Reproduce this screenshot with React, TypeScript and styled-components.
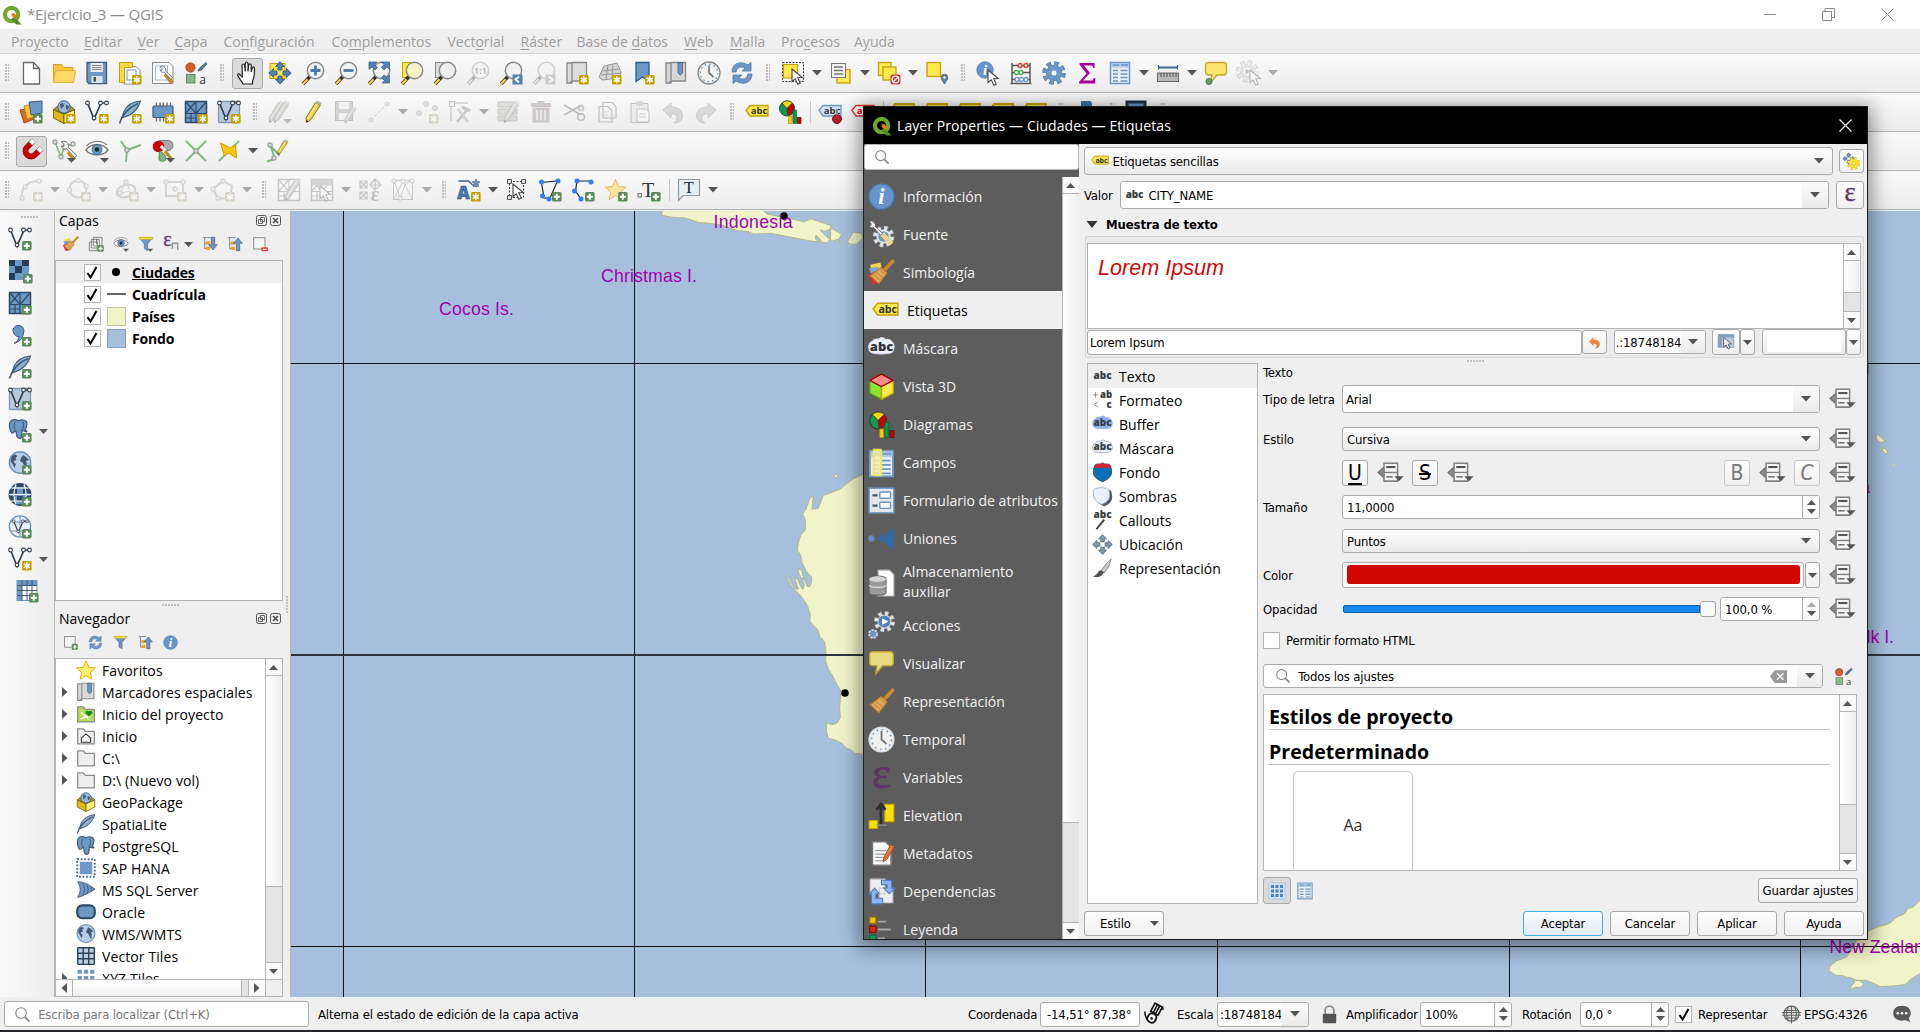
import React from "react";
import styled, { createGlobalStyle, css } from "styled-components";

const UI = `"Open Sans", "Noto Sans", sans-serif`;
const TAHOMA = `"DejaVu Sans Condensed", "DejaVu Sans", sans-serif`;

const Global = createGlobalStyle`
  * { box-sizing: border-box; }
  body { margin: 0; background: #efefef; overflow: hidden; font-family: ${UI}; font-size: 14px; color: #000; }
  svg { display: block; flex: none; }
`;

/* ------------------------------------------------------------------ icons */

const B = "#6d97c4";
const D = "#415a75";
const Y = "#fce94f";
const G = "#c4a000";

const Plus = ({ x = 14, y = 14 }: { x?: number; y?: number }) => (
  <g transform={`translate(${x} ${y})`}>
    <rect width="9.6" height="9.6" rx="1.6" fill="#5a8c5a" />
    <path d="M4.8 1.8v6M1.8 4.8h6" stroke="#fff" strokeWidth="2" />
  </g>
);
const Star = ({ x = 14, y = 14 }: { x?: number; y?: number }) => (
  <g transform={`translate(${x} ${y})`}>
    <rect width="9.6" height="9.6" rx="1.4" fill="#c4a000" />
    <path d="M4.8 1.3v7M1.8 3l6 3.6M7.8 3l-6 3.6" stroke="#fff" strokeWidth="1.5" />
  </g>
);
const Drop = ({ x = 15, y = 19 }: { x?: number; y?: number }) => (
  <path d={`M${x} ${y}h9l-4.5 4.8z`} fill="#555" />
);
const Lens = ({ fill = "#f2f4f2", children }: { fill?: string; children?: React.ReactNode }) => (
  <>
    <path d="M9 15.500 2 23" stroke="#333" strokeWidth="3.6" />
    <path d="M6.500 18.200 2 23" stroke="#fccf3e" strokeWidth="2.2" />
    <circle cx="14.500" cy="9.500" r="8.200" fill={fill} stroke="#888" strokeWidth="1.5" />
    {children}
  </>
);
const Cursor = ({ x = 10, y = 8 }: { x?: number; y?: number }) => (
  <path transform={`translate(${x} ${y})`} d="M0 0v12.500l3.200-2.700 2.600 5.400 2.400-1.200-2.500-5.200 4.600-.3z" fill="#fff" stroke="#444" strokeWidth="1.100" />
);
const Vee = () => (
  <g fill="#fff" stroke="#333f4c" strokeWidth="1.100">
    <path d="M2.500 3 9 19 16 3h5.500" fill="none" strokeWidth="1.700" />
    <circle cx="2.500" cy="3" r="1.900" /><circle cx="9" cy="18" r="1.900" /><circle cx="15.500" cy="3" r="1.900" /><circle cx="21.500" cy="3" r="1.900" />
  </g>
);
const Pencil = ({ c = "#e8cf3a", t = "" }: { c?: string; t?: string }) => (
  <g transform={t}>
    <path d="M14.500 2.500 19.500 5 9.500 20 5.500 22.500 5 18z" fill={c} stroke="#8a7a20" strokeWidth="1" />
    <path d="M16.500 3.500 6.800 19" stroke="#fff" strokeOpacity=".5" strokeWidth="1.500" />
    <path d="M14.500 2.500 16 .5l4.800 2.300-1.300 2.200z" fill="#b8b8b8" />
    <path d="m5.300 20 .2 2.500 2-1.200z" fill="#222" />
  </g>
);
const Feather = () => (
  <>
    <path d="M22.500 1C15 1.500 9 5 6 11.500L4 18l4-1.500c7-2.500 12-7.500 14.500-15.500z" fill="#8fb2d8" stroke={D} strokeWidth="1.200" />
    <path d="M1.500 23.500C4 15 10 8 20 3.500" stroke={D} strokeWidth="1.600" fill="none" />
  </>
);
const Tag = ({ f = Y, s = G, t = "#333" }: { f?: string; s?: string; t?: string }) => (
  <>
    <path d="M1 10.500 5 5.500h18v10.500H5z" fill={f} stroke={s} strokeWidth="1.300" />
    <text x="14" y="14" fontSize="9.500" fontWeight="700" textAnchor="middle" fontFamily={UI} fill={t}>abc</text>
  </>
);
const Abc = ({ y = 14, c = "#3a3f42" }: { y?: number; c?: string }) => (
  <text x="12" y={y} fontSize="11.500" fontWeight="800" textAnchor="middle" fontFamily={UI} fill={c}>abc</text>
);
const Cloud = ({ f, s }: { f: string; s: string }) => (
  <path d="M4 5.500C6 2.500 9 4 10 3.500c2-2 5-1 5.500.8 3-1 5 .2 5.500 1.700 3 1.500 3 8.500-1 10-4 .8-12 .8-16 0-4.500-1.500-4.500-8.500 0-10.500z" fill={f} stroke={s} />
);
const Globe = ({ dark = false }: { dark?: boolean }) => (
  <>
    <circle cx="12" cy="11.500" r="10.700" fill={dark ? "#6d97c4" : "#b9cfe8"} stroke={dark ? "#2d4a68" : B} strokeWidth="1.500" />
    {dark ? (
      <>
        <path d="M3 5.500h6v5H1.500zM15 5.500h6l1.500 5H15zM9 13h6v5H9zM2 13h5v5H4zM9 1h6l1 3H8zM17 13h5l-2 5h-3z" fill="#2d4a68" />
        <path d="M8 1.500c-2.500 6-2.500 14 0 20M16 1.500c2.500 6 2.500 14 0 20M2 5h20M1 11.500h22M2.500 18h19" fill="none" stroke="#fff" strokeWidth="1.200" />
      </>
    ) : (
      <path d="M3.500 6c1-1.500 2-2.500 4-2.500l2 1.500-2 2 1 2-3 1 1 2 1.500 1-1.500 4-2-4-2-3zM13 7l2-3 3 2 3 3-3 1 1 3-2 4-2-5-3-2zM17 16l2-1-1 3z" fill={D} />
    )}
  </>
);
const Elephant = () => (
  <>
    <path d="M4 1.500C1 3 1 9 3 14c1 2.500 3 2.500 4 .5l2-1 1 6c1 3.500 5 3.500 5.500 0L16 13l5 1.500c1.500-1-.5-1-1.500-2 2-4 3-8 1-10C18 .5 14 1 12 2 9 .5 6 .7 4 1.500z" fill={B} stroke={D} strokeWidth="1.400" />
    <path d="M8 3.500c-2 3-1.500 8 1 10M16.500 3c2 3 1 7-1 9.500" fill="none" stroke={D} strokeWidth="1.200" />
  </>
);
const Refresh = () => (
  <>
    <path d="M2 11C2 4 8 0 15 2.500l3 1.500 3-2.500V10h-9l3-3C11 5 7 6 6 11z" fill={B} stroke="#4a79ad" strokeWidth=".8" />
    <path d="M22 13c0 7-6 11-13 8.500L6 20l-3 2.500V14h9l-3 3c4 2 8 1 9-4z" fill={B} stroke="#4a79ad" strokeWidth=".8" />
  </>
);
const TableG = () => (
  <>
    <rect x="2.500" y="1.500" width="19" height="21" fill="#e8eef5" stroke={B} strokeWidth="1.500" />
    <rect x="3" y="2" width="18" height="4.500" fill="#a9c8ea" />
    <path d="M5 4h6M13 4h7M5 9.500h5M12.500 9.500h7M5 13h5M12.500 13h7M5 16.500h5M12.500 16.500h7M5 20h5M12.500 20h7" stroke={B} strokeWidth="1.500" />
  </>
);
const FolderG = ({ f = "#eee" }: { f?: string }) => <path d="M2 3.500h7l2 3h11v15H2z" fill={f} stroke="#8a8a8a" strokeWidth="1.500" strokeLinejoin="round" />;
const Gear = ({ c = B, s = "#4a79ad" }: { c?: string; s?: string }) => (
  <>
    <circle cx="12" cy="12" r="9.300" fill="none" stroke={s} strokeWidth="5" strokeDasharray="4.300 3.004" />
    <circle cx="12" cy="12" r="8" fill={s} />
    <circle cx="12" cy="12" r="9" fill="none" stroke={c} strokeWidth="4" strokeDasharray="3 4.069" strokeDashoffset="-.5" />
    <circle cx="12" cy="12" r="7.300" fill={c} />
  </>
);
const Broom = () => (
  <>
    <path d="M22 2 14 10.500" stroke="#c98a2c" strokeWidth="3.200" strokeLinecap="round" />
    <path d="M11.500 7.500 17 12.500 9.500 22 2 15z" fill="#e0a95c" stroke="#b57a28" strokeWidth="1" />
    <path d="M11 9.500 15 13.500M5 14l6 5M7 12l6 4.500" stroke="#c98d40" strokeWidth="1" />
  </>
);
const Bubble = ({ f = "#fbe46c" }: { f?: string }) => (
  <path d="M4.500 1.500h15c2 0 3 1 3 3v6.500c0 2-1 3-3 3H13L7 21l1-7H4.500c-2 0-3-1-3-3V4.500c0-2 1-3 3-3z" fill={f} stroke="#c2a430" strokeWidth="1.300" />
);
const Clock = ({ r = "#888" }: { r?: string }) => (
  <>
    <circle cx="12" cy="12" r="11" fill="#f2f2f0" stroke={r} strokeWidth="1.300" />
    <circle cx="12" cy="12" r="8.800" fill="none" stroke={B} strokeWidth="1.500" strokeDasharray="1.500 3.100" />
    <path d="M12 4.500V12l4.500 4" stroke="#777" strokeWidth="1.700" fill="none" />
  </>
);
const Eye = () => (
  <>
    <path d="M1 12C6 5 18 5 23 12 18 18.500 6 18.500 1 12z" fill="#fff" stroke="#777" strokeWidth="1.300" />
    <path d="M1.500 8C7 2 17 2 22 7" stroke="#888" fill="none" strokeWidth="1.200" />
    <circle cx="12" cy="11.500" r="5" fill={B} stroke="#3e6793" /><circle cx="12" cy="11.500" r="2.300" fill="#132" />
  </>
);
const StyleMgr = () => (
  <>
    <circle cx="6.500" cy="6.500" r="4.600" fill="#d2602d" stroke="#a84618" />
    <path d="m14 10 1.500-3L22 1.500l1 1.500-5.500 6z" fill="#4a74a5" stroke={D} strokeWidth=".8" />
    <rect x="2.500" y="13.500" width="8.500" height="8.500" fill="#8fb58f" stroke="#5e8c5e" />
    <text x="18.500" y="22.500" fontSize="12" textAnchor="middle" fontFamily={UI} fill="#333">a</text>
  </>
);
const Diagram = () => (
  <>
    <circle cx="9" cy="8.500" r="7.500" fill="#0a9a4a" stroke="#333" strokeWidth=".9" />
    <path d="M9 8.500 4 3C7 0 12 .5 14.500 3z" fill="#fcd20a" stroke="#333" strokeWidth=".7" />
    <path d="M9 8.500 14.500 3c3 4 2 10-4.500 13z" fill="#c00" stroke="#333" strokeWidth=".7" />
    <rect x="10.500" y="16" width="3.500" height="7.500" fill="#fcc80a" stroke="#c88a00" strokeWidth=".7" />
    <rect x="15" y="10" width="3.500" height="13.500" fill="#0a9a4a" stroke="#063" strokeWidth=".7" />
    <rect x="19.500" y="17.500" width="3.500" height="6" fill="#c00" stroke="#600" strokeWidth=".7" />
  </>
);
const Box3 = () => (
  <g strokeWidth="1.200" strokeLinejoin="round">
    <path d="M1.500 6.500 12 12v11.500L1.500 18z" fill="#8ae234" stroke="#4e9a06" />
    <path d="M22.500 6.500 12 12v11.500L22.500 18z" fill="#fce94f" stroke="#c4a000" />
    <path d="M12 1 22.500 6.500 12 12 1.500 6.500z" fill="#f98c8c" stroke="#a40000" />
  </g>
);
const MeshG = ({ n = 0 }: { n?: number }) => (
  <g>
    <rect x="1.500" y="1.500" width="21" height="21" fill={n ? "#fff" : B} stroke={n ? "#777" : "#2d4a68"} strokeWidth="1.500" />
    <path d="M12 1.500v21M1.500 13.500h21M1.500 1.500 12 13.500M12 1.500 1.500 13.500M22.500 1.500 12 13.500M7 13.500v9M1.500 18H12" stroke={n ? "#777" : "#2d4a68"} strokeWidth="1.200" fill="none" />
  </g>
);
const BlueI = () => (
  <>
    <circle cx="12" cy="12" r="11" fill="#6594cf" stroke="#4f7fba" />
    <text x="12" y="18.500" fontSize="20" fontWeight="700" fontStyle="italic" textAnchor="middle" fontFamily="Liberation Serif, serif" fill="#fff">i</text>
  </>
);
const Node = ({ p }: { p: number[][] }) => <>{p.map(([x, y], i) => <rect key={i} x={x - 2} y={y - 2} width="4" height="4" rx="1" fill="#ddd" stroke="#888" />)}</>;
const TreeArrow = ({ up = false }: { up?: boolean }) => (
  <>
    <path d="M1 2.500h12M4 2.500v17M4 11h3M4 19h3" stroke="#888" strokeWidth="1.500" fill="none" />
    <rect x="6" y="8" width="6" height="5" fill="#f9a02c" /><rect x="6" y="16" width="6" height="5" fill="#f9a02c" />
    <path transform={up ? "matrix(1 0 0 -1 0 24)" : undefined} d="M14 2h5v11h4l-6.500 8L10 13h4z" fill={B} stroke={D} />
  </>
);
const Epsilon = ({ c = "#5c3566" }: { c?: string }) => (
  <text x="12" y="21" fontSize="40" textAnchor="middle" fontFamily="Liberation Serif, serif" fill={c} stroke={c} strokeWidth=".5">ε</text>
);
const Bag = ({ f = "#d8d8d8" }: { f?: string }) => (
  <><path d="M2 2h5v20H2zM7 1.500h14.500v18.500H7L4 22.500" fill={f} stroke="#888" strokeWidth="1.300" /></>
);
const Arrow4 = ({ f = B, s = D }: { f?: string; s?: string }) => (
  <g fill={f} stroke={s} strokeWidth=".9">
    {[0, 90, 180, 270].map((r) => <path key={r} transform={`rotate(${r} 12 12)`} d="M12 .8 16.500 5.500h-2.500V9h-4V5.500H7.500z" />)}
  </g>
);
const Page = () => <path d="M4 1.500h11.500l5 5v16H4z" fill="#fff" stroke="#777" strokeWidth="1.300" />;
const Wrench = () => <path d="M3 2.500 6 5v3l-3-.5C4 11 7 12 9.500 11l10 11 3-2.500-10.500-10C13 6 10 1.500 6 1.500z" fill="#f5f5f5" stroke="#555" strokeWidth="1.100" />;
const Funnel = () => (
  <>
    <path d="M2 2.500h20L14.500 12v10l-5-3v-7z" fill={B} stroke="#4b6f98" /><path d="M2 2h20v3H2z" fill={Y} stroke={G} strokeWidth=".8" />
  </>
);
const Gpkg = () => (
  <>
    <path d="M1.500 9.500 12 14v9.500L1.500 18z" fill="#e0b812" stroke="#776010" />
    <path d="M22.500 9.500 12 14v9.500L22.500 18z" fill="#fdf07a" stroke="#776010" />
    <path d="m1.500 9.500 5-4h11l5 4L12 14z" fill="#b59a10" stroke="#776010" />
    <circle cx="12" cy="7" r="6.200" fill="#9ab8d8" stroke={D} />
    <path d="M8 4l3-1 1 3-3 3zM14 5l3 1-1 4-2-1z" fill={D} />
  </>
);

const ICONS: Record<string, React.ReactNode> = {
  qgis: <><circle cx="11.500" cy="11.500" r="8" fill="none" stroke="#6fa62c" strokeWidth="5" /><path d="m14.500 14 9 9.500h-6.500l-6-6.500z" fill="#4f8a24" /><path d="M11.500 10h3.500l3.500 4-3 2.500-4-3.500z" fill="#ee7913" /></>,
  newdoc: <path d="M4.500 1.500h10l6 6v15.500h-16zM14.500 1.500v6h6" fill="#fff" stroke="#666" strokeWidth="1.300" />,
  open: <><path d="M1.500 20V3.500h8l2 3h9.500V10" fill="#fbc83c" stroke="#d5a021" /><path d="M1.500 21.500 3.500 9.500H23.500l-2 12z" fill="#fdd663" stroke="#e2b13c" /></>,
  save: <><path d="M2 1.500h19.500v21H4l-2-2z" fill={B} stroke={D} strokeWidth="1.300" /><path d="M5.500 2h12.500v9H5.500z" fill="#e8eaec" /><path d="M7 4.500h9.500M7 6.500h9.500M7 8.500h9.500" stroke="#888" /><path d="M6.500 15h11v7h-11z" fill="#dfe3e8" /><path d="M8.500 16h2.500v4.500H8.500z" fill="#355" /></>,
  layout: <><path d="M6 5.500h12l4 4V23H6z" fill="#fff" stroke="#888" /><path d="M1.500 1.500h13v5h-8v15h-5z" fill="#fbd84a" stroke={G} /><path d="M9 9h9v10H9z" fill="none" stroke={B} /><Star /></>,
  layoutmgr: <><path d="M1.500 1.500H18l4 4v17H1.500z" fill="#fff" stroke="#888" /><path d="M4.500 5h12v14h-12z" fill="none" stroke="#9ab6dc" /><path d="M14 13 21 22" stroke="#b89030" strokeWidth="4" /><g transform="translate(7 4) scale(.65)"><Wrench /></g></>,
  stylemgr: <StyleMgr />,
  hand: <path d="M8 23c-1-3-4-5-5.500-9 .3-1.700 2-1.500 3.300.6L7.500 16 7 4.500c.2-2 2.300-2 2.600 0l.7 6V2.500c.3-2 2.500-2 2.700 0v8l.7-6.500c.5-1.700 2.500-1.500 2.500.4V11l1-4c.7-1.500 2.400-1 2.300.7-.2 4 .5 8-2 12.300v3z" fill="#fff" stroke="#222" strokeWidth="1.200" />,
  pansel: <><rect x="2" y="2.500" width="15" height="15" fill={Y} stroke={G} /><Arrow4 f="#4f81bb" /></>,
  zoomin: <Lens><path d="M14.500 4.500v10M9.500 9.500h10" stroke="#4a79ad" strokeWidth="2.800" /></Lens>,
  zoomout: <Lens><path d="M9.500 9.500h10" stroke="#4a79ad" strokeWidth="2.800" /></Lens>,
  zoomfull: <><Lens /><path d="M2 1h8L7.500 3.500l3 3L8 9 5 6 2 8.500zM22.500 1h-8L17 3.500l-2.500 3L17 9l3-3 2.500 2.500zM22.500 22v-8L20 16.500l-3-2.500-2.500 2.500 3 3-2.500 2.500z" fill="#4f81bb" stroke={D} strokeWidth=".7" /></>,
  zoomsel: <><rect x="2.500" y="1.500" width="14" height="15" fill={Y} stroke={G} /><Lens fill="#f6f3c8" /></>,
  zoomlayer: <><rect x="2.500" y="1.500" width="14" height="15" fill="#ddd" stroke="#888" /><Lens fill="#eef0ee" /></>,
  zoom11: <Lens><text x="14.500" y="13" fontSize="9" fontWeight="700" textAnchor="middle" fontFamily={UI} fill="#555">1:1</text></Lens>,
  zoomlast: <><Lens /><rect x="13.500" y="13.500" width="10" height="10" fill="#4f81bb" /><path d="m20 15.500-3.500 3L20 21.500" stroke="#fff" strokeWidth="2" fill="none" /></>,
  zoomnext: <><Lens /><rect x="13.500" y="13.500" width="10" height="10" fill="#888" /><path d="m17 15.500 3.500 3L17 21.500" stroke="#fff" strokeWidth="2" fill="none" /></>,
  mapview: <><Bag f="#dcdcdc" /><Star /></>,
  view3d: <><path d="m6 5 13-3 4 9-1 6-18 2-3-3z" fill="#d4d4d4" stroke="#999" /><path d="M4 10l18-2M3 14l20-2M10 4 8 18M15 3l-1 15" stroke="#999" fill="none" /><Star /></>,
  bmnew: <><path d="M5 1.500h13v19l-6.500-4.500L5 20.500z" fill={B} stroke="#2d5a8a" strokeWidth="1.300" /><Star /></>,
  bm: <><Bag /><path d="M14 1.500h4.500V12l-2.200 2-2.300-2z" fill={B} stroke={D} strokeWidth=".8" /></>,
  clock: <Clock />,
  refresh: <Refresh />,
  select: <><rect x="1.500" y="1.500" width="21" height="19" fill="none" stroke="#333" strokeDasharray="2 1.300" /><rect x="2.500" y="3.500" width="14" height="13.500" fill={Y} stroke={G} /><Cursor x={11} y={8} /></>,
  selform: <><rect x="8" y="8.500" width="13" height="13.500" fill="#fce94f" stroke={G} strokeWidth="1.300" /><rect x="2.500" y="2.500" width="14" height="14" fill="#f3f3f0" stroke="#777" /><path d="M5 6h9M5 9.500h9M5 13h9" stroke="#777" strokeWidth="1.600" /></>,
  desel: <><rect x="1.500" y="1.500" width="12.500" height="13" fill={Y} stroke={G} strokeWidth="1.300" /><rect x="6" y="6" width="13" height="13" fill={Y} stroke={G} strokeWidth="1.300" /><rect x="13.500" y="13.500" width="10" height="10" rx="2" fill="#d33" /><circle cx="18.500" cy="18.500" r="3.300" fill="none" stroke="#fff" strokeWidth="1.300" /><path d="m16 21 5-5" stroke="#fff" strokeWidth="1.300" /></>,
  selloc: <><rect x="2" y="1.500" width="13.500" height="14" fill={Y} stroke={G} strokeWidth="1.300" /><path d="M19.500 23c-2.500-4-3.300-5-3.300-6.500a3.300 3.300 0 0 1 6.600 0c0 1.500-.8 2.500-3.300 6.500z" fill="#5f7f9a" stroke="#456" strokeWidth=".7" /><circle cx="19.500" cy="16.500" r="1.200" fill="#fff" /></>,
  identify: <><g transform="scale(.75)"><BlueI /></g><Cursor x={12} y={9} /></>,
  abacus: <><path d="M1.500 22.500h21M3 2v20M21 2v20M3 4.500h18M3 11.500h18M3 18.500h18" stroke="#555" strokeWidth="1.500" /><g fill="#fff" strokeWidth="1.300"><g stroke="#d33"><circle cx="11" cy="4.500" r="2" /><circle cx="17" cy="4.500" r="2" /></g><g stroke="#4a4"><circle cx="7.500" cy="11.500" r="2" /><circle cx="12" cy="11.500" r="2" /></g><g stroke={B}><circle cx="8" cy="18.500" r="2" /><circle cx="12.500" cy="18.500" r="2" /><circle cx="17" cy="18.500" r="2" /></g></g></>,
  gear: <><Gear /><circle cx="12" cy="12" r="2.500" fill="#fff" /></>,
  sigma: <path d="M4.500 2h15v5h-1.300l-1-2.500H9L15 12l-7 7.500h9.500L19 17h1.300v5.500H4V21l7.500-8.500L4.500 3.500z" fill="#a4009a" />,
  table: <TableG />,
  measure: <><path d="M2 6.500h20" stroke="#3e6793" strokeWidth="2" /><path d="M2.500 4v5M21.500 4v5" stroke="#3e6793" /><rect x="1.500" y="12" width="21" height="8.500" fill="#b8b8b8" stroke="#666" /><path d="M5 12v4M8 12v4M11 12v4M14 12v4M17 12v4M20 12v4" stroke="#555" /></>,
  maptip: <><g transform="translate(0 0)"><Bubble /></g><circle cx="5" cy="20.500" r="3" fill="#6a9a6a" stroke="#4a7a4a" /></>,
  action: <><g transform="translate(-1 -1) scale(.95)"><Gear c="#ddd" s="#888" /></g><circle cx="10.500" cy="10.500" r="5" fill="#fff" stroke="#888" /><path d="m8.500 7.500 5 3-5 3z" fill="#777" /><Cursor x={13} y={9} /></>,
  dsm: <><path d="m1 10 10-2 4 11-10 4z" fill="#d86a28" stroke="#a84a12" /><path d="m5 6 10-2 3 12-10 3z" fill="#fbc23c" stroke="#c08a12" /><path d="m10 2 13-1 0 12-11 2z" fill={B} stroke={D} /><Plus /></>,
  gpkg: <Gpkg />,
  gpkgnew: <><Gpkg /><Star /></>,
  veenew: <><Vee /><Star /></>,
  veeadd: <><Vee /><Plus /></>,
  feathernew: <><Feather /><Star /></>,
  featheradd: <><Feather /><Plus /></>,
  feather: <Feather />,
  chip: <><path d="M5.500 2.500v19M9 2.500v19M12.500 2.500v19M16 2.500v19M19.500 2.500v19" stroke="#666" strokeWidth="1.300" /><rect x="2" y="6" width="20" height="11.500" rx="1" fill={B} stroke={D} strokeWidth="1.200" /><Star /></>,
  meshnew: <><MeshG /><Star /></>,
  meshadd: <><MeshG /><Plus /></>,
  virtual: <><rect x="1.500" y="1.500" width="21" height="21" fill="#b6c9de" stroke="#7f97b3" strokeWidth="1.300" rx="1" /><Vee /><Star /></>,
  virtualadd: <><rect x="1.500" y="1.500" width="21" height="21" fill="#b6c9de" stroke="#7f97b3" strokeWidth="1.300" rx="1" /><Vee /><Plus /></>,
  pencils: <><Pencil c="#999" t="translate(-4 0)" /><Pencil c="#999" t="translate(1 0)" /><Drop /></>,
  pencil: <Pencil />,
  saveedit: <><rect x="1.500" y="1.500" width="17" height="19" fill="#999" stroke="#666" /><path d="M5 2h10v7H5zM5 13h10v7H5z" fill="#eee" /><Pencil c="#b98" t="translate(7 6) scale(.75)" /></>,
  digit: <><path d="M4 20 20 4" stroke="#888" strokeDasharray="3 2" /><circle cx="4" cy="20" r="2" fill="#ddd" stroke="#888" /><circle cx="20" cy="4" r="2" fill="#ddd" stroke="#888" /></>,
  points: <><g fill="#bbb" stroke="#888"><circle cx="4" cy="13" r="2.500" /><circle cx="11" cy="4" r="2.500" /><circle cx="20" cy="8" r="2.500" /></g><Star /></>,
  vertex: <><path d="M3 3h17M3 3v18" stroke="#888" strokeWidth="1.500" /><rect x="1.500" y="1.500" width="5" height="5" fill="#ddd" stroke="#666" /><path d="m9 22 10-12" stroke="#777" strokeWidth="2.600" /><path d="m10 9 10 13" stroke="#999" strokeWidth="2.600" /><path d="m14 7 8 4" stroke="#777" strokeWidth="3.500" /></>,
  modattr: <><path d="M2 2h19v5H2zM2 9h19v5H2zM2 16h19v5H2z" fill="#b5b59a" stroke="#777" /><Pencil c="#b9a0a0" t="translate(3 0)" /></>,
  trash: <><path d="M2.500 3.500h19v3h-19zM9 1.500h6v2H9zM4 8h16v14H4z" fill="#b87878" stroke="#a66" /><path d="M8 10v10M12 10v10M16 10v10" stroke="#eee" strokeWidth="1.400" /></>,
  cut: <><path d="m2 5 17 10M2 15 20 5" stroke="#666" strokeWidth="2" /><circle cx="19" cy="17" r="3.300" fill="none" stroke="#a55" strokeWidth="1.600" /><circle cx="19" cy="8" r="2.500" fill="none" stroke="#a55" strokeWidth="1.600" /></>,
  copy: <><path d="M8 2.500h9l4 4V18H8zM4 6.500h9l4 4V22H4z" fill="#f3f3f3" stroke="#666" strokeWidth="1.200" /><path d="M6.500 12h7M6.500 15h7M6.500 18h7" stroke="#888" /></>,
  paste: <><path d="M3 3.500h17v19H3z" fill="#ddd" stroke="#666" /><path d="M8 1.500h7v4H8z" fill="#999" /><path d="M9 9h9l3 3v10H9z" fill="#fff" stroke="#666" /><path d="M11 14h7M11 17h7" stroke="#888" /></>,
  undo: <path d="M2 10 10 3v4c8 0 13 3 11 12-2 3-5 4-8 4 4-3 5-9-3-9.500V18z" fill="#b3a49a" stroke="#8d7d73" />,
  redo: <path d="M22 10 14 3v4C6 7 1 10 3 19c2 3 5 4 8 4-4-3-5-9 3-9.500V18z" fill="#aaa" stroke="#888" />,
  tag: <Tag />,
  diagram: <Diagram />,
  pin: <><Tag f="#cfe2f7" s={B} /><circle cx="19" cy="19" r="4.500" fill="#b5202a" stroke="#7d1118" /><path d="M19 9v6" stroke="#888" strokeWidth="2" /></>,
  redtag: <Tag f="#fff" s="#d33" t="#d00" />,
  hidtag: <path d="M1 9 4 4h19v10H4z" fill={Y} stroke={G} strokeWidth="1.800" />,
  python: <><path d="M7 1h8c3 0 3 2 3 5v5H8c-3 0-3 3-3 5H3c-2-3-2-8 0-9h9V6H7z" fill="#3c73a5" /><path d="M17 23H9c-3 0-3-2-3-5v-5h10c3 0 3-3 3-5h2c2 3 2 8 0 9h-9v1h5z" fill="#fbd03c" /></>,
  book: <path d="M2 2h18v20H2z" fill={B} stroke="#234" strokeWidth="3" />,
  magnet: <g transform="rotate(45 12 12)"><path d="M4 4v8a8 8 0 0 0 16 0V4h-5v8a3 3 0 0 1-6 0V4z" fill="#c80000" stroke="#8e0000" strokeWidth=".8" /><path d="M4 2.500h5V7H4zM15 2.500h5V7h-5z" fill="#fff" stroke="#999" strokeWidth=".7" /></g>,
  snapv: <><path d="M3 3 9 18 13 6h8" fill="none" stroke="#8ab58a" strokeWidth="1.800" /><Node p={[[3, 3], [9, 18], [21, 5]]} /><g transform="translate(7 1) scale(.8)"><Wrench /></g><path d="m16 13 6 8" stroke="#b89030" strokeWidth="3.500" /><Drop /></>,
  eye: <><g transform="translate(0 -1)"><Eye /></g><Drop /></>,
  topo: <><path d="M3 2 9 11 23 6M9 11 8 23" stroke="#7fb77f" strokeWidth="1.900" fill="none" /><Node p={[[9, 11]]} /></>,
  overlap: <><rect x="5" y="1.500" width="17" height="10" rx="5" fill="#aaa" stroke="#777" /><circle cx="7.500" cy="7.500" r="5.800" fill="#c00" /><path d="M9 12c3 2 6 4 6 8 0 3-7 3-7 0 0-3 0-5 1-8z" fill="#7fb77f" stroke="#4a8a4a" /><path d="m10 7 9 11" stroke="#f3f3f3" strokeWidth="3" /><path d="m14 12 7 9" stroke="#b89030" strokeWidth="3.200" /><Drop /></>,
  cross: <><path d="M2 2 22 22M22 2 2 22" stroke="#7fb77f" strokeWidth="1.900" /><Node p={[[12, 12]]} /></>,
  bolt: <><path d="M2 22 22 2" stroke="#7fb77f" strokeWidth="1.900" /><path d="m3.500 4 10 5 5-3 1 13-8-5-4 3z" fill="#fcc80a" stroke="#d09a00" /></>,
  trace: <><path d="M2 22.500 10 20 5.500 7 14 16l4-12" stroke="#7fb77f" strokeWidth="1.900" fill="none" /><Node p={[[5, 6], [9, 19]]} /><Pencil t="translate(9 0) scale(.7)" /></>,
  circ1: <><path d="M3 20C2 10 8 3 20 3" fill="none" stroke="#999" strokeWidth="1.800" /><Node p={[[3, 20], [6, 9], [20, 3]]} /><Star /></>,
  circ2: <><circle cx="11" cy="11" r="8.500" fill="none" stroke="#999" strokeWidth="2" /><Node p={[[11, 2.5], [2.5, 12], [19, 8]]} /><Star /></>,
  ellipse: <><ellipse cx="11" cy="13" rx="9.500" ry="6" fill="none" stroke="#999" strokeWidth="2" transform="rotate(-15 11 13)" /><path d="m5 15 6-11 4 9z" fill="none" stroke="#999" /><Node p={[[11, 4], [5, 15]]} /><Star /></>,
  rect: <><rect x="3" y="4" width="17" height="14" fill="none" stroke="#999" strokeWidth="2" /><Node p={[[3, 4], [12, 11], [20, 4]]} /><Star /></>,
  poly: <><path d="m2 11 10-8 9 5-2 12-12 1z" fill="none" stroke="#999" strokeWidth="2" /><Node p={[[2, 11], [12, 3], [7, 20]]} /><Star /></>,
  meshedit: <><MeshG n={1} /><Pencil c="#b9a0a0" t="translate(3 0)" /></>,
  meshsel: <><MeshG n={1} /><path d="M1.500 1.500h21v6h-21z" fill="#999" /><Cursor x={10} y={8} /></>,
  meshtr: <><path d="M2 3h7v7H2zM2 14h7v7H2zM2 3l7 7M9 3l-7 7M2 14l7 7M9 14l-7 7M17 1l6 6-6 5-5-5zM17 1v11M12 7h11" fill="none" stroke="#777" strokeWidth="1.200" /><text x="17" y="23" fontSize="20" fontWeight="700" textAnchor="middle" fontFamily="Liberation Serif, serif" fill="#666">ε</text></>,
  meshv: <><rect x="2.500" y="2.500" width="19" height="19" fill="#f5f5f5" stroke="#777" /><path d="M3 3 9 20 15 5 21 3M3 21 12 3l9 18" fill="none" stroke="#888" /><Node p={[[3, 3], [12, 3], [21, 3], [9, 20]]} /></>,
  astar: <><path d="M1.500 3h10l4 4 5 2" stroke="#355f8f" strokeWidth="1.300" fill="none" /><text x="6.500" y="21" fontSize="17" fontWeight="800" textAnchor="middle" fontFamily={UI} fill="#4a79ad" stroke="#234a77" strokeWidth=".5">A</text><path d="m19 1 1.200 2.500 2.800.2-2 2 .7 2.800-2.700-1.500L16.300 8.500l.7-2.800-2-2 2.800-.2z" fill={B} stroke={D} strokeWidth=".6" /><Star /></>,
  annsel: <><path d="M4.500 3.500h14v16h-14z" fill="none" stroke="#333" strokeDasharray="2 1.500" /><g fill="#ddd" stroke="#555"><path d="M2.500 1.500h4v4h-4zM16.500 1.500h4v4h-4zM2.500 17.500h4v4h-4z" /></g><Cursor x={8} y={6} /></>,
  annpoly: <><path d="M3.500 4.500 19.500 3 12 20H6z" fill="none" stroke="#222" strokeWidth="1.200" /><g fill="#2a7fff"><circle cx="3.500" cy="4" r="2.500" /><circle cx="20" cy="3" r="2.500" /><circle cx="4.500" cy="18" r="2.500" /><circle cx="11" cy="21" r="2.500" /></g><Plus /></>,
  annline: <><path d="M20 3 6 3 4.500 13 10 21" fill="none" stroke="#222" strokeWidth="1.200" /><g fill="#2a7fff"><circle cx="20" cy="4" r="2.500" /><circle cx="6" cy="3" r="2.500" /><circle cx="3.500" cy="13" r="2.500" /><circle cx="10" cy="21" r="2.500" /></g><Plus /></>,
  annstar: <><path d="m11.500 1.500 3 7 7.500.7-5.700 5 1.700 7.300-6.500-4L5 21.500l1.700-7.300L1 9.200l7.500-.7z" fill="#fbe3a0" stroke="#e0b860" /><Plus /></>,
  anntext: <><text x="11" y="19" fontSize="20" textAnchor="middle" fontFamily="Liberation Serif, serif" fill="#333">T</text><rect x="1" y="15.500" width="3.500" height="3.500" fill="#ddd" stroke="#777" /><Plus /></>,
  annbubble: <><path d="M1.500 1.500h21v16H6l-4.500 5z" fill="#e4eef5" stroke="#999" strokeWidth="1.200" /><text x="12" y="15" fontSize="16" textAnchor="middle" fontFamily="Liberation Serif, serif" fill="#222">T</text></>,
  raster: <><path d="M1 1h20v20H1z" fill={B} /><path d="M1 1h6v6H1zM14 1h7v6h-7zM7 7h7v7H7zM1 14h6v7H1z" fill="#223c5a" /><Plus x={15} y={15} /></>,
  comma: <><path d="M5 7a5.500 5.500 0 1 1 10.500 3C15 16 11 19 6 20.500c3.500-2.500 5-4.500 5-7C8 14 5 11 5 7z" fill={B} stroke={D} /><Plus /></>,
  pgadd: <><g transform="scale(.88)"><Elephant /></g><Plus /></>,
  wmsadd: <><Globe /><Plus /></>,
  wcsadd: <><Globe dark /><Plus /></>,
  wfsadd: <><circle cx="12" cy="11.500" r="10.700" fill="#e8f0f8" stroke={B} strokeWidth="1.300" /><path d="M2 7h20M2 16h20M12 1v21" stroke={B} /><g transform="translate(4 4) scale(.7)"><Vee /></g><Plus /></>,
  gridadd: <><rect x="2" y="1.500" width="20" height="20" fill="#fff" stroke={B} /><path d="M2 1.500h5v20H2zM2 1.500h20v5H2z" fill={B} /><path d="M7 1.500v20M12 1.500v20M17 1.500v20M2 6.500h20M2 11.500h20M2 16.500h20" stroke={D} /><Plus /></>,
  symb: <><path d="m2 5 9-2 2 8-8 8z" fill="#f7d34a" /><path d="m1 8 8-1 2 8-7 4z" fill="#7aa5d8" /><path d="m0 14 6-3 6 9-8 3z" fill="#d9302c" /><Broom /></>,
  groupadd: <><path d="M2 9h12v13H2zM5 5h12v13H5zM8 2h13v13H8z" fill="#f2f2f2" stroke="#777" strokeWidth="1.300" /><path d="M13 4v8" stroke="#777" strokeWidth="2" /><Plus /></>,
  funneld: <><Funnel /><Drop x={14} /></>,
  funnel: <Funnel />,
  exprf: <><text x="6.500" y="15" fontSize="30" textAnchor="middle" fontFamily="Liberation Serif, serif" fill="#5c3566" stroke="#5c3566" strokeWidth=".5">ε</text><path d="M13 11h9v10M14 11v8" stroke="#999" strokeWidth="2.400" fill="none" /></>,
  expand: <TreeArrow />,
  collapse: <TreeArrow up />,
  remove: <><rect x="2.500" y="2.500" width="17" height="17" fill="#f4f4f4" stroke="#8a8f8a" strokeWidth="1.500" /><rect x="14" y="17" width="10" height="6" rx="1.500" fill="#e8403c" /><path d="M16 20h6" stroke="#fff" strokeWidth="1.500" /></>,
  addlayer: <><rect x="2.500" y="2.500" width="17" height="17" fill="#f4f4f4" stroke="#8a8f8a" strokeWidth="1.500" /><Plus /></>,
  star: <path d="m12 1 3.300 7.700 8 .8-6 5.500 1.700 8-7-4.300L5 23l1.700-8-6-5.500 8-.8z" fill="#fdf06a" stroke="#d8b010" strokeWidth="1.200" />,
  home: <><FolderG /><path d="M6.500 14.500 12 9.500l5.500 5v5h-11z" fill="#fff" stroke="#333" strokeWidth="1.300" /></>,
  projhome: <><FolderG f="#b8dc5a" /><path d="m5 18 12-4M6 10l10 9" stroke="#fff" strokeWidth="1.500" /><path d="m15.500 15-4-4c-1-3 3-4 4-2 1-2 5-1 4 2z" fill="#0a8a1a" /></>,
  folder: <FolderG />,
  pg: <Elephant />,
  hana: <><rect x="4.500" y="4.500" width="15" height="15" fill={B} /><rect x="1.500" y="1.500" width="21" height="21" fill="none" stroke="#44607f" strokeWidth="2.200" strokeDasharray="2 2.200" /></>,
  mssql: <><path d="M2 2c8 0 14 4 21 9-7 4-13 8-21 10 4-7 4-12 0-19z" fill={B} stroke={D} /><path d="M8 3.500c3 5 3 10 0 15M13 5.500c2 4 2 8 0 11M18 8c1 2 1 4 0 6" stroke={D} fill="none" /></>,
  oracle: <rect x="1.500" y="4" width="21" height="15.500" rx="6" fill={B} stroke="#2d4a68" strokeWidth="2.600" />,
  wms: <Globe />,
  vtiles: <><rect x="2" y="2" width="20" height="20" fill="#b9cfe8" /><path d="M2 2v20M8.600 2v20M15.300 2v20M22 2v20M2 2h20M2 8.600h20M2 15.300h20M2 22h20" stroke="#2d3f54" strokeWidth="1.700" /></>,
  xyz: <path d="M2 2h5v5H2zM9.500 2h5v5h-5zM17 2h5v5h-5zM2 9.500h5v5H2zM9.500 9.500h5v5h-5zM17 9.500h5v5h-5zM2 17h5v5H2zM9.500 17h5v5h-5zM17 17h5v5h-5z" fill={B} />,
  info: <BlueI />,
  source: <><g transform="translate(4 4) scale(.82)"><Gear c="#e3e7ea" s="#aaa" /></g><circle cx="13.800" cy="13.800" r="4.600" fill={B} /><path d="M12.500 11.500 21 20.500" stroke="#e8d88a" strokeWidth="4.500" /><g transform="translate(-1 -1) scale(.62)"><Wrench /></g></>,
  maskw: <><Cloud f="#eef0ff" s="#dde" /><Abc c="#333" /></>,
  box3d: <Box3 />,
  fields: <><g transform="translate(-1 0) scale(1.080)"><TableG /></g><rect x="5" y=".5" width="6.500" height="23" fill="#f3e9b8" fillOpacity=".85" stroke="#f5ea3a" strokeWidth="1.500" /></>,
  form: <><rect x="1" y="1" width="22" height="22" fill="#e3e6ea" stroke={B} strokeWidth="1.300" /><g fill="#fff" stroke={B} strokeWidth="1.300"><rect x="10.500" y="4.500" width="9.500" height="5.500" rx="1" /><rect x="10.500" y="13.500" width="9.500" height="5.500" rx="1" /></g><path d="M4 7.500h4.500M4 16.500h4.500" stroke={D} strokeWidth="2" /></>,
  join: <><circle cx="3" cy="12" r="2.800" fill="#5d8fcb" /><path d="M7.500 12 23.500 3v19z" fill="#37679f" /></>,
  aux: <><path d="M9 1h10l4 4v19H9z" fill="#fff" stroke="#bbb" /><path d="M1 9c0-3.500 15-3.500 15 0v12c0 3-15 3-15 0z" fill="#9a9a9a" stroke="#666" /><ellipse cx="8.500" cy="9" rx="7.500" ry="2.500" fill="#d5d5d5" /><path d="M1 14.500c2 2.500 13 2.500 15 0" stroke="#ddd" fill="none" /></>,
  acts: <><g transform="translate(5 -1) scale(.8)"><Gear c="#e3e6e8" s="#aaa" /></g><circle cx="14.500" cy="8.500" r="5.300" fill="#4f81bb" /><path d="m12.500 5.500 5.500 3-5.500 3z" fill="#fff" /><circle cx="4.500" cy="19.500" r="3.600" fill={B} stroke="#ddd" strokeWidth="1.500" strokeDasharray="2 1" /></>,
  display: <Bubble f="#e8dc82" />,
  broom: <Broom />,
  clockw: <Clock r="#ddd" />,
  eps: <Epsilon />,
  elev: <><rect x="15" y="2" width="8" height="15.500" fill="#f8e010" stroke="#c8a800" /><rect x="1" y="16.500" width="7.500" height="7" fill="#f8e010" stroke="#c8a800" /><path d="M11.500 20V3M7.500 7l4-5 4 5" stroke="#2a2f33" strokeWidth="2.400" fill="none" /><path d="M7 20.500h10" stroke="#999" /></>,
  meta: <><Page /><path d="M6.500 9.500h10M6.500 12.500h10M6.500 15.500h10M6.500 18.500h7" stroke="#999" strokeWidth="1.200" /><path d="M14 16 20 4l3.500 1.500L17 17l-3.500 2.500z" fill="#e07a3a" stroke="#a84618" strokeWidth=".8" /></>,
  deps: <><path d="M2 1h13v13H2zM10 9h12v13H10z" fill="#eee" stroke="#ccc" /><path d="M12 2h9v7h3l-5 5-5-5h3V6h-5zM1 14l5-5 4 5H7v4h6v5H3v-9z" fill="#8db4ee" stroke="#4a79c4" strokeWidth=".9" /></>,
  legend: <><path d="M1.500 1h5.500v5.500H1.500z" fill="#f8c010" stroke="#a07800" /><path d="M1.500 9h5.500v5.500H1.500z" fill="#e02810" stroke="#801000" /><path d="M1.500 17h5.500v5.500H1.500z" fill="#10a050" stroke="#065" /><path d="M9 5h7M9 12h11M9 20h6" stroke="#aaa" strokeWidth="1.600" /></>,
  abc: <Abc y={15} />,
  format: <><text x="16" y="9.500" fontSize="11" fontWeight="800" textAnchor="middle" fontFamily={UI} fill="#3a3f42">ab</text><text x="19.500" y="20" fontSize="11" fontWeight="800" textAnchor="middle" fontFamily={UI} fill="#3a3f42">c</text><path d="M4 2.500v6M1 5.500h6M7 13.500l-5 3 5 3" stroke="#888" fill="none" /></>,
  buffer: <><Cloud f="#8fb0f4" s="#8fb0f4" /><Abc /></>,
  mask: <><Cloud f="#eef2fb" s="#a5adb5" /><Abc /></>,
  shield: <><path d="M3 4C5 1 9 3.500 12 1c3 2.500 7 0 9 3 3 9 2 14-9 18.500C1 18 0 13 3 4z" fill="#0b6fb8" stroke="#345" /><path d="M3 4C5 1 9 3.500 12 1c3 2.500 7 0 9 3l.8 2.500H2.300z" fill="#d8242c" /></>,
  shadow: <><path d="M5 6c2-3 6-.5 9-3 3 2.500 6 0 8 3 2 8 2 13-8 17.500C4 19 3 14 5 6z" fill="#555b60" /><path d="M2 4c2-3 6-.5 9-3 3 2.500 6 0 8 3 2 8 2 13-8 17C1 17 1 11 2 4z" fill="#eaf0ff" stroke="#8fb0e8" /></>,
  callout: <><Abc y={9} /><path d="m14 11-9 11" stroke="#333" strokeWidth="2" /></>,
  place: <Arrow4 f="#7f9bb0" s="#4a6478" />,
  brush: <><path d="m22 1-7 7-5 7 4 2 5-7z" fill="#c8c8c8" stroke="#888" /><path d="M10 14c-3 0-4 6-9 7 4 2 11 1 12.500-5z" fill="#555" /></>,
  override: <><path d="M1 11.500 7 6v11z" fill="#8a8a8a" stroke="#6a6a6a" /><path d="M6.500 3h12.500v16.500h-12.500z" fill="#f6f6f6" stroke="#82827c" strokeWidth="1.400" /><path d="M8.500 6.500h8.500" stroke="#555" strokeWidth="1.900" /><path d="M6.500 11.500h12.500" stroke="#82827c" strokeWidth="1.300" /><path d="M8.500 15.500h6" stroke="#777" strokeWidth="1.500" /><path d="M16 15h8.500l-4.200 4.500z" fill="#555" /></>,
  place2: <><g transform="translate(-1 -1) scale(.75)"><Arrow4 /></g><g transform="translate(5.500 5.500) scale(.78)"><Gear c="#fbe234" s="#d8b810" /><circle cx="12" cy="12" r="3" fill="#fdf3a0" stroke={G} /></g></>,
  undoo: <path d="M2 10 10 2v5c8 0 14 3 11 12-2 3-5 4-8 4 4-3 4-8-3-9v5z" fill="#e8853c" />,
  canvas: <><path d="M1.500 2h21v17h-21z" fill="#b8cbe0" stroke="#7f97b3" /><path d="M1.500 2h21v4h-21zM1.500 2h5v17h-5z" fill="#8aa0b8" /><Cursor x={9} y={6} /></>,
  grid9: <><rect x="1" y="1" width="22" height="22" fill="#cfe0f3" stroke="#a9c4e2" /><path d="M4 4h4v4H4zM10 4h4v4h-4zM16 4h4v4h-4zM4 10h4v4H4zM10 10h4v4h-4zM16 10h4v4h-4zM4 16h4v4H4zM10 16h4v4h-4zM16 16h4v4h-4z" fill="#4f81bb" /></>,
  clear: <><path d="M0 12 6.500 3H24v18H6.500z" fill="#999" /><path d="m10 7.500 9 9M19 7.500l-9 9" stroke="#fff" strokeWidth="2" /></>,
  mag: <><circle cx="10" cy="10" r="7.500" fill="none" stroke="#8a8a8a" strokeWidth="1.700" /><path d="m15.500 15.500 6.500 6.500" stroke="#8a8a8a" strokeWidth="2.600" /></>,
  mouse: <><g transform="rotate(28 12 12)"><path d="M7 0h10v11H7z" fill="#fff" stroke="#111" strokeWidth="2" /><path d="M10.500 0v11M13.500 0v11" stroke="#111" strokeWidth="2" /><rect x="7" y="12" width="10" height="11" rx="4.500" fill="#fff" stroke="#111" strokeWidth="2.200" /><circle cx="12" cy="18" r="1.600" fill="#111" /></g><path d="M1 9c0 4 1 7 3 10M22 3l1 4" stroke="#111" strokeWidth="1.800" fill="none" /></>,
  lock: <><path d="M6.500 11V7a5.500 5.500 0 0 1 11 0v4" fill="none" stroke="#888" strokeWidth="2.300" /><rect x="3.500" y="11" width="17" height="12" rx="1.500" fill="#555" /></>,
  crs: <><circle cx="12" cy="11" r="9.500" fill="#ddd" stroke="#666" strokeWidth="1.600" /><path d="M12 1.500v22M8 2.500c-3 6-3 11 0 17M16 2.500c3 6 3 11 0 17M3 7h18M4 16.500h16" fill="none" stroke="#666" strokeWidth="1.300" /><path d="M0 9.500h24M0 13h24" stroke="#666" strokeWidth="1.400" /></>,
  msg: <><path d="M12 2C5 2 1.500 6 1.500 11S5 20 12 20c2 0 3-.3 4-.8L22 22l-2-5c2-2 2.500-4 2.500-6C22.500 6 19 2 12 2z" fill="#5a5a5a" /><g fill="#fff"><circle cx="7" cy="11" r="1.500" /><circle cx="12" cy="11" r="1.500" /><circle cx="17" cy="11" r="1.500" /></g></>,
};

const Svg = styled.svg<{ $off?: boolean }>`
  overflow: visible;
  ${(p) => p.$off && css`filter: grayscale(0.75) opacity(0.36);`}
`;
const Icon = ({ n, s = 24, off }: { n: string; s?: number; off?: boolean }) => (
  <Svg width={s} height={s} viewBox="0 0 24 24" $off={off}>{ICONS[n]}</Svg>
);

const Caret = ({ up, off, w = 10 }: { up?: boolean; off?: boolean; w?: number }) => (
  <svg width={w} height={w / 2 + 0.5} viewBox="0 0 10 5.500"><path d={up ? "M0 5.500h10L5 0z" : "M0 0h10L5 5.500z"} fill={off ? "#aaa" : "#555"} /></svg>
);

/* ------------------------------------------------------------- main window */

const Window = styled.div`
  position: relative; width: 1920px; height: 1032px; overflow: hidden;
  display: flex; flex-direction: column; background: #efefef;
`;
const TitleBar = styled.div`
  height: 29px; background: #fff; display: flex; align-items: center; padding: 0 26px 0 2px;
  color: #8c8c8c; font-size: 15px; gap: 5px; flex: none;
`;
const TitleText = styled.span`flex: 1; white-space: nowrap; padding-bottom: 1px; letter-spacing: -0.15px;`;
const WinButtons = styled.div`display: flex; gap: 46px; align-items: center; padding-bottom: 1px; svg { fill: none; stroke: #8a8a8a; }`;
const MenuBar = styled.div`
  height: 25px; border-bottom: 1px solid #d4d4d4; display: flex; align-items: center; gap: 15px;
  padding: 0 0 0 11px; color: #9d9d9d; flex: none;
`;
const MenuItem = styled.span<{ $w: number }>`
  width: ${(p) => p.$w}px; white-space: nowrap;
  u { text-underline-offset: 2px; }
`;
const ToolRow = styled.div`
  height: 39px; border-bottom: 1px solid #b4b4b4; flex: none; display: flex; align-items: center;
  background: linear-gradient(#fafafa, #ededed);
`;
const Slot = styled.div<{ $on?: boolean }>`
  width: 33px; height: 31px; display: flex; align-items: center; justify-content: center; flex: none;
  ${(p) => p.$on && css`width: 31px; margin: 0 1px; border: 1px solid #a8a8a8; border-radius: 3px; background: #dadada;`}
`;
const DropSlot = styled.div`width: 15px; flex: none; display: flex; justify-content: center; padding-right: 1px;`;
const Grip = styled.div<{ $first?: boolean }>`
  width: ${(p) => (p.$first ? 14.5 : 18)}px; height: 18px; flex: none; display: flex; justify-content: center;
  &::after { content: ""; width: 4px; background: radial-gradient(circle at 1px 1px, #bbb 0.7px, transparent 1px) 0 0 / 3px 3px; }
`;
const Sep = styled.div`width: 1px; height: 22px; background: #c8c8c8; margin: 0 3px;`;
const DotsH = styled.div<{ $x: number; $h?: number }>`
  height: ${(p) => p.$h ?? 6}px; padding-left: ${(p) => p.$x}px; display: flex; align-items: center; flex: none;
  &::after { content: ""; width: 17px; height: 2px; background: radial-gradient(circle at 1px 1px, #c0c0c0 0.7px, transparent 1px) 0 0 / 3px 3px; }
`;

const Tools = ({ items }: { items: string[] }) => (
  <ToolRow>
    {items.map((t, i) => {
      if (t === "|") return <Grip key={i} $first={i === 0} />;
      if (t === "/") return <Sep key={i} />;
      if (t === "v" || t === "-v") return <DropSlot key={i}><Caret off={t === "-v"} /></DropSlot>;
      const off = t[0] === "-";
      const on = t[0] === "+";
      return <Slot key={i} $on={on}><Icon n={off || on ? t.slice(1) : t} off={off} /></Slot>;
    })}
  </ToolRow>
);

const Main = styled.div`flex: 1; display: flex; min-height: 0; padding-top: 1px;`;
const SideBar = styled.div`
  width: 55px; border-right: 1px solid #b8b8b8; background: linear-gradient(90deg, #fafafa, #ededed);
  display: flex; flex-direction: column; flex: none;
`;
const SideRow = styled.div<{ $x?: number }>`
  height: 32px; display: flex; align-items: center; gap: 7px; padding-left: ${(p) => p.$x ?? 8}px;
`;
const Docks = styled.div`width: 228px; display: flex; flex-direction: column; flex: none;`;
const DockTitle = styled.div<{ $up?: boolean }>`
  height: 21px; padding: 0 2px ${(p) => (p.$up ? 2 : 1)}px 4px; display: flex; align-items: center; gap: 3px; flex: none;
  span { flex: 1; }
`;
const DockTools = styled.div<{ $h: number; $b: number }>`
  height: ${(p) => p.$h}px; display: flex; align-items: center; padding: 0 0 ${(p) => p.$b}px 3px; flex: none;
  > div { width: 25px; display: flex; justify-content: center; }
`;
const DropNarrow = styled.span`width: 14px; display: flex; justify-content: center; padding-right: 4px;`;
const DockBtn = () => (
  <>
    <svg width="11" height="11" viewBox="0 0 11 11" fill="none" stroke="#555"><rect x=".5" y=".5" width="10" height="10" rx="2" /><path d="M4.500 2.500h4v4h-4zM2.500 4.500h4v4h-4z" strokeWidth=".9" /></svg>
    <svg width="11" height="11" viewBox="0 0 11 11" fill="none" stroke="#555"><rect x=".5" y=".5" width="10" height="10" rx="2" /><path d="m3 3 5 5M8 3 3 8" strokeWidth="1.700" /></svg>
  </>
);
const Tree = styled.div<{ $h: number }>`
  height: ${(p) => p.$h}px; border: 1px solid #b4b4b4; background: #fff; display: flex; flex-direction: column; flex: none; overflow: hidden;
`;
const LayerRow = styled.div<{ $sel?: boolean }>`
  height: 22px; padding-left: 27.5px; display: flex; align-items: center; font-weight: 700; flex: none; letter-spacing: -0.15px;
  background: ${(p) => (p.$sel ? "#efefef" : "#fff")};
  text-decoration: ${(p) => (p.$sel ? "underline" : "none")};
`;
const Check = styled.span`
  width: 17px; height: 17px; border: 1px solid #b4b4b4; background: #fff; display: flex; align-items: center; justify-content: center; flex: none;
`;
const Tick = () => <svg width="12" height="13" viewBox="0 0 12 13"><path d="m1.500 7 3 4.500L10.500 1" fill="none" stroke="#000" strokeWidth="2" /></svg>;
const Swatch = styled.span`width: 31.5px; display: flex; align-items: center; justify-content: center; flex: none;`;
const ColorBox = styled.i<{ $c: string; $b: string }>`width: 19px; height: 19px; background: ${(p) => p.$c}; border: 1px solid ${(p) => p.$b};`;
const Dot = styled.i`width: 8px; height: 8px; border-radius: 50%; background: #000;`;
const Line = styled.i`width: 19px; height: 2px; background: #666;`;

const BrowserRow = styled.div`height: 22px; display: flex; align-items: center; flex: none; white-space: nowrap; letter-spacing: 0.1px;`;
const Expander = styled.span`width: 17px; display: flex; justify-content: center; margin-right: 3px; flex: none;`;
const TreeIcon = styled.span`width: 26px; flex: none; display: flex;`;

const Row = styled.div`display: flex; min-height: 0; flex: 1;`;
const Fill = styled.div`flex: 1; min-width: 0; overflow: hidden;`;
const VBar = styled.div`width: 17px; border-left: 1px solid #b4b4b4; display: flex; flex-direction: column; flex: none; background: #e4e4e4;`;
const Btn17 = styled.div`height: 16px; width: 16px; flex: none; background: #fafafa; display: flex; align-items: center; justify-content: center; padding-right: 1px;`;
const VHandle = styled.div<{ $h: number }>`
  height: ${(p) => p.$h}px; flex: none; border: solid #b4b4b4; border-width: 1px 0; background: linear-gradient(90deg, #fff, #efefef);
`;
const VGap = styled.div`flex: 1; border-bottom: 1px solid #b4b4b4;`;
const Scroll = ({ handle }: { handle: number }) => (
  <VBar><Btn17><Caret up w={9} /></Btn17><VHandle $h={handle} /><VGap /><Btn17><Caret w={9} /></Btn17></VBar>
);
const HBar = styled.div`height: 17px; border-top: 1px solid #b4b4b4; display: flex; background: #e4e4e4; flex: none;`;
const HHandle = styled.div`width: 170px; border: solid #b4b4b4; border-width: 0 1px; background: linear-gradient(#fff, #f0f0f0);`;
const HGap = styled.div`width: 7px; border-right: 1px solid #b4b4b4;`;
const Corner = styled.div`flex: 1; border-left: 1px solid #b4b4b4; background: #efefef;`;
const Splitter = styled.div`
  width: 8px; flex: none; border-right: 1px solid #b4b4b4; display: flex; align-items: center; justify-content: center;
  &::after { content: ""; width: 2px; height: 17px; background: radial-gradient(circle at 1px 1px, #c0c0c0 0.7px, transparent 1px) 0 0 / 3px 3px; }
`;
const MapPane = styled.div`flex: 1; background: #a5bfdd; overflow: hidden;`;

const Tri = () => <svg width="6" height="10" viewBox="0 0 6 10"><path d="M0 0v10l5.500-5z" fill="#555" /></svg>;
const TriL = () => <svg width="6" height="10" viewBox="0 0 6 10"><path d="M6 0v10L.5 5z" fill="#555" /></svg>;

const BROWSER: [string, string, boolean][] = [
  ["star", "Favoritos", false], ["bm", "Marcadores espaciales", true], ["projhome", "Inicio del proyecto", true],
  ["home", "Inicio", true], ["folder", "C:\\", true], ["folder", "D:\\ (Nuevo vol)", true], ["gpkg", "GeoPackage", false],
  ["feather", "SpatiaLite", false], ["pg", "PostgreSQL", false], ["hana", "SAP HANA", false], ["mssql", "MS SQL Server", false],
  ["oracle", "Oracle", false], ["wms", "WMS/WMTS", false], ["vtiles", "Vector Tiles", false], ["xyz", "XYZ Tiles", true],
];

const land = { fill: "#f0f4c8", stroke: "#b5b688", strokeWidth: 1, vectorEffect: "non-scaling-stroke" as const };
const MapView = () => (
  <MapPane>
    <svg width="1629" height="786" viewBox="291 211 1629 786">
      <g transform="translate(640 200) scale(.33333 .38265)">
        <path {...land} d="M66 20v20l30 5 40 2 40 12 30 2 40 5 45 14 30 2 20 7 50-2 60 10 60 10 50 5 10-10 2-35-60-18-20 8-50-10-60-10-40-27zM540 78l15 4 20-8 30 16-8 12-20 5-15-9zM630 98l10-14 25 3 5 12-20 16-18 1-10-6zM528 92l16 14-8 4-10-8z" />
        <path {...land} d="M680 712l-40 17-20 12-20 15-50 16-8 18-8 16-18 2 4-36-12 10-10 26-10 12 8 16 0 26-14 14-7 20-3 20 10 12 4 20 15 25 14 12 0 12-6 14-8-2-8-18-6 0 6 14-2 10-4 2-8-12-6-14-10-4 6 14 6 16-12-2-14-24-10-12 2 8 16 26 20 16 14 15 12 18 8 22-2 16 12 14 12 8 6 18 14 14 5 24-1 28 8 20 12 16 16 28 10 13-4 42 2 28-10 14-12 4-20-4 0 20 6 20 20 4 20 8 14 14 12 3 14 10 16 2 20 2z" />
        <path {...land} d="M582 720l6-4 5 3-4 7-5-1zM474 964l12 4 2 14 6 6-8 0-8-8zM595 110l8-4 2 5zM15 193l8 2-2 5-6-2z" />
      </g>
      <g transform="translate(1240 640) scale(.43365 .33333)">
        <path {...land} d="M1568 780l-14 20-14 6-8 16-16 8-18 20-24 10-10 4-20 12-20 20-12 30-14 26-22 10-16 16-2 14 16 14 14 0 12 6 10 2 12 8 20-2 24 12 8 8 30-2 30-4 14-18 26-20 14-30 12-3zM1415 1018l14 4 10 10-8 10-12 0-14 8 6-14 6-8z" />
      </g>
      <path {...land} d="m1877 434 5 4 3 3-4 2-5-4zM1882 448l4 1 2 5-4-1z" />
      <circle cx="1893.500" cy="464.500" r="1.500" fill="#c9cc9c" />
      <g shapeRendering="crispEdges" stroke="#111" strokeWidth="1">
        <path d="M343.500 211v786M634.500 211v786M925.500 211v786M1217.500 211v786M1509.500 211v786" />
        <path d="M291 363.500h1629M291 946.500h1629" />
        <path d="M1800.500 211v786" strokeWidth="1" />
        <path d="M291 655h1629" stroke="#2b3440" strokeWidth="2" />
      </g>
      <circle cx="784" cy="216" r="3.800" /><circle cx="845" cy="693" r="3.800" />
      <g fontFamily="Liberation Sans, Arial, sans-serif" fontSize="17.700" fill="#a300b0">
        <text x="713.500" y="228" textLength="79">Indonesia</text>
        <text x="601" y="281.500" textLength="96">Christmas I.</text>
        <text x="439" y="315" textLength="75">Cocos Is.</text>
        <text x="1894" y="643" textAnchor="end">Norfolk I.</text>
        <text x="1869.500" y="375" textAnchor="end">u</text>
        <text x="1870" y="493" textAnchor="end">a</text>
        <text x="1829.500" y="953">New Zealand</text>
      </g>
    </svg>
  </MapPane>
);

/* --------------------------------------------------------------- widgets */

const small = css`font-family: ${TAHOMA}; font-size: 13px; letter-spacing: -0.15px; white-space: nowrap;`;
const Field = styled.div<{ $w?: number; $h?: number; $raised?: boolean; $pad?: number }>`
  ${small}
  ${(p) => (p.$w ? css`width: ${p.$w}px; flex: none;` : css`flex: 1;`)}
  height: ${(p) => p.$h ?? 24}px; border: 1px solid #ababab; border-radius: 3px; display: flex; align-items: center;
  background: ${(p) => (p.$raised ? "linear-gradient(#fdfdfd, #ebebeb)" : "#fff")};
  padding-left: ${(p) => p.$pad ?? 4}px; overflow: hidden;
  > span { flex: 1; overflow: hidden; }
`;
const DropEnd = styled.div<{ $w?: number; $plain?: boolean; $ml?: number }>`
  width: ${(p) => p.$w ?? 26}px; margin-left: ${(p) => p.$ml ?? 0}px; align-self: stretch; display: flex; align-items: center; justify-content: center;
  background: ${(p) => (p.$plain ? "none" : "linear-gradient(#fbfbfb, #ebebeb)")};
`;
const SpinEnd = styled.div`
  width: 17px; align-self: stretch; border-left: 1px solid #ababab; background: #fafafa;
  display: flex; flex-direction: column; align-items: center; justify-content: center; gap: 4px;
`;
const Spin = ({ topOff }: { topOff?: boolean }) => <SpinEnd><Caret up w={9} off={topOff} /><Caret w={9} /></SpinEnd>;
const Button = styled.div<{ $w: number; $h?: number; $primary?: boolean; $on?: boolean; $dim?: boolean }>`
  ${small}
  width: ${(p) => p.$w}px; height: ${(p) => p.$h ?? 25}px; flex: none; border-radius: 3px;
  border: 1px solid ${(p) => (p.$primary ? "#3daee9" : p.$dim ? "#c9c9c9" : "#a8a8a8")};
  background: ${(p) => (p.$on ? "#dadada" : p.$primary ? "linear-gradient(#f8fbfd, #e2edf5)" : "linear-gradient(#fdfdfd, #f0f0f0)")};
  display: flex; align-items: center; justify-content: center;
`;
const MenuButton = styled(Button)`justify-content: space-between; padding: 0 4px 0 15px;`;

/* ---------------------------------------------------------------- dialog */

const Dialog = styled.div`
  position: absolute; left: 863px; top: 106px; width: 1005px; height: 834px; border: 1px solid #1c1c1c;
  box-shadow: 0 4px 18px 4px rgba(0, 0, 0, 0.42); background: #efefef; display: flex; flex-direction: column;
`;
const DialogTitle = styled.div`
  height: 37px; background: #000; color: #fff; display: flex; align-items: center; padding: 0 15px 0 8px; gap: 5px; flex: none;
  letter-spacing: 0.08px;
  span { flex: 1; }
`;
const DialogBody = styled.div`flex: 1; display: flex; min-height: 0;`;
const Nav = styled.div`width: 215px; display: flex; flex-direction: column; background: #5d5d5d; flex: none;`;
const NavSearch = styled.div`
  height: 26px; background: #fff; border: 1px solid #b8b8b8; border-radius: 3px; display: flex; align-items: center; padding-left: 9px; flex: none;
`;
const NavArea = styled.div`flex: 1; display: flex; min-height: 0; padding-top: 7px;`;
const NavList = styled.div`flex: 1; overflow: hidden; width: 198px;`;
const NavItem = styled.div<{ $sel?: boolean; $tall?: boolean }>`
  height: ${(p) => (p.$tall ? 49 : 38)}px; display: flex; align-items: center; gap: 8px;
  padding: 1px 0 0 ${(p) => (p.$sel ? 8 : 4)}px; line-height: 20px;
  color: ${(p) => (p.$sel ? "#000" : "#f2f2f2")}; background: ${(p) => (p.$sel ? "#efefef" : "none")};
  white-space: ${(p) => (p.$tall ? "normal" : "nowrap")};
`;
const Pane = styled.div`flex: 1; padding: 3px 3px 0 5px; display: flex; flex-direction: column; min-width: 0;`;
const HRow = styled.div<{ $h: number; $mt?: number; $gap?: number }>`
  height: ${(p) => p.$h}px; margin-top: ${(p) => p.$mt ?? 0}px; display: flex; align-items: center; gap: ${(p) => p.$gap ?? 0}px; flex: none;
`;
const Label = styled.span<{ $w?: number; $bold?: boolean }>`
  ${small}
  ${(p) => p.$w && css`width: ${p.$w}px; flex: none;`}
  ${(p) => p.$bold && css`font-weight: 700; letter-spacing: -0.1px;`}
`;
const GroupHead = styled.div`height: 27px; padding-top: 4px; display: flex; align-items: center; gap: 5px; flex: none;`;
const Group = styled.div`
  margin-left: 1px; height: 122px; border: 1px solid #d6d6d6; border-radius: 2px; background: #ebebeb; padding: 6px 2px 0 1px; flex: none;
`;
const Preview = styled.div`height: 86px; border: 1px solid #b4b4b4; background: #fff; display: flex;`;
const Sample = styled.div`
  flex: 1; padding: 11px 0 0 10px; font: italic 21.6px "Liberation Sans", Arial, sans-serif; color: #cf0a0a;
`;
const Well = styled.div`width: 74px; height: 20px; background: #fff;`;
const Columns = styled.div`height: 541px; margin-left: 3px; display: flex; gap: 5px; flex: none;`;
const List = styled.div`width: 171px; border: 1px solid #b4b4b4; background: #fff; flex: none;`;
const ListItem = styled.div<{ $sel?: boolean }>`
  height: 24px; padding-left: 4px; display: flex; align-items: center; gap: 6px; background: ${(p) => (p.$sel ? "#efefef" : "none")};
`;
const Form = styled.div`flex: 1; display: flex; flex-direction: column; min-width: 0;`;
const Control = styled.div`width: 478px; display: flex; align-items: center; flex: none;`;
const Over = styled.div`width: 26px; margin-left: 9px; flex: none;`;
const Gap9 = styled.div`width: 9px; flex: none;`;
const GlyphBtn = styled(Button)<{ $italic?: boolean; $deco?: string }>`
  font-size: 21px; letter-spacing: 0; font-style: ${(p) => (p.$italic ? "italic" : "normal")};
  text-decoration: ${(p) => p.$deco ?? "none"}; text-decoration-thickness: 2px; text-underline-offset: 3px;
  color: ${(p) => (p.$dim ? "#777" : "#000")};
`;
const Spacer = styled.div`flex: 1;`;
const ColorBtn = styled.div`width: 462px; height: 26px; border: 1px solid #ababab; border-radius: 3px; background: #fafafa; padding: 2px 3px 3px 4px; margin-right: 1px;`;
const Red = styled.div`height: 100%; border-radius: 3px; background: #d20700;`;
const Track = styled.div`
  width: 374px; display: flex; align-items: center; margin-right: 4px; padding-left: 1px;
  &::before { content: ""; flex: 1; height: 6px; border: 1px solid #0a5ea8; border-radius: 2px 0 0 2px; background: #168af0; }
`;
const Knob = styled.div`width: 16px; height: 16px; border: 1px solid #a0a0a0; border-radius: 3px; background: #fafafa;`;
const StyleBox = styled.div`width: 594px; height: 177px; margin-top: 6px; border: 1px solid #b4b4b4; background: #fff; display: flex; flex: none;`;
const StyleBody = styled.div`flex: 1; overflow: hidden; padding: 0 9px 0 5px;`;
const Heading = styled.div`
  height: 35px; border-bottom: 1px solid #c0c0c0; font-weight: 700; font-size: 19.600px; line-height: 20px; padding-top: 12px;
`;
const Card = styled.div`
  margin: 6px 0 0 24px; width: 120px; height: 120px; border: 1px solid #c8c8c8; border-radius: 5px;
  display: flex; justify-content: center; padding-top: 42px; font-size: 16px; color: #333;
`;

const NAV: [string, string][] = [
  ["info", "Información"], ["source", "Fuente"], ["symb", "Simbología"], ["tag", "Etiquetas"], ["maskw", "Máscara"], ["box3d", "Vista 3D"],
  ["diagram", "Diagramas"], ["fields", "Campos"], ["form", "Formulario de atributos"], ["join", "Uniones"], ["aux", "Almacenamiento auxiliar"],
  ["acts", "Acciones"], ["display", "Visualizar"], ["broom", "Representación"], ["clockw", "Temporal"], ["eps", "Variables"], ["elev", "Elevation"],
  ["meta", "Metadatos"], ["deps", "Dependencias"], ["legend", "Leyenda"],
];
const PAGES: [string, string][] = [
  ["abc", "Texto"], ["format", "Formateo"], ["buffer", "Buffer"], ["mask", "Máscara"], ["shield", "Fondo"], ["shadow", "Sombras"],
  ["callout", "Callouts"], ["place", "Ubicación"], ["brush", "Representación"],
];

const Override = () => <Over><Icon n="override" s={26} /></Over>;

const LayerDialog = () => (
  <Dialog>
    <DialogTitle>
      <Icon n="qgis" s={20} />
      <span>Layer Properties — Ciudades — Etiquetas</span>
      <svg width="13" height="13" viewBox="0 0 13 13"><path d="m.5.5 12 12M12.500.5l-12 12" stroke="#fff" strokeWidth="1.100" /></svg>
    </DialogTitle>
    <DialogBody>
      <Nav>
        <NavSearch><Icon n="mag" s={16} /></NavSearch>
        <NavArea>
          <NavList>
            {NAV.map(([ic, t]) => (
              <NavItem key={t} $sel={t === "Etiquetas"} $tall={ic === "aux"}><Icon n={ic} s={27} />{t}</NavItem>
            ))}
          </NavList>
          <Scroll handle={630} />
        </NavArea>
      </Nav>
      <Pane>
        <HRow $h={28} $gap={6}>
          <Field $w={749} $h={28} $raised $pad={6}><Icon n="tag" s={18} /><span>&nbsp;Etiquetas sencillas</span><DropEnd $plain><Caret /></DropEnd></Field>
          <Button $w={25} $h={24}><Icon n="place2" s={17} /></Button>
        </HRow>
        <HRow $h={28} $mt={6}>
          <Label $w={36}>Valor</Label>
          <Field $w={709} $h={28} $pad={3}><Icon n="abc" s={21} /><span>&nbsp;CITY_NAME</span><DropEnd><Caret /></DropEnd></Field>
          <Spacer />
          <Button $w={28} $h={28}><Icon n="eps" s={16} /></Button>
        </HRow>
        <GroupHead><svg width="17" height="9" viewBox="0 0 17 9"><path d="M2.500 1h11L8 8z" fill="#333" /></svg><Label $bold>Muestra de texto</Label></GroupHead>
        <Group>
          <Preview><Sample>Lorem Ipsum</Sample><Scroll handle={33} /></Preview>
          <HRow $h={26}>
            <Field $w={495} $h={25} $pad={2}><span>Lorem Ipsum</span></Field>
            <Button $w={25} $h={24}><Icon n="undoo" s={13} /></Button>
            <Spacer />
            <Field $w={92} $h={24} $pad={1}><span>.:18748184</span><DropEnd $w={24}><Caret /></DropEnd></Field>
            <Spacer />
            <Button $w={28} $h={26}><Icon n="canvas" s={18} /></Button>
            <Button $w={15} $h={26}><Caret w={9} /></Button>
            <Spacer />
            <Field $w={84} $h={26} $raised $pad={4}><Well /></Field>
            <Button $w={15} $h={26}><Caret w={9} /></Button>
          </HRow>
        </Group>
        <DotsH $x={383} $h={5} />
        <Columns>
          <List>{PAGES.map(([ic, t]) => <ListItem key={t} $sel={t === "Texto"}><Icon n={ic} s={21} />{t}</ListItem>)}</List>
          <Form>
            <HRow $h={18}><Label>Texto</Label></HRow>
            <HRow $h={28} $mt={4}><Label $w={79}>Tipo de letra</Label><Control><Field $h={28} $pad={3}><span>Arial</span><DropEnd><Caret /></DropEnd></Field></Control><Override /></HRow>
            <HRow $h={24} $mt={14}><Label $w={79}>Estilo</Label><Control><Field $raised><span>Cursiva</span><DropEnd $plain><Caret /></DropEnd></Field></Control><Override /></HRow>
            <HRow $h={26} $mt={9}>
              <Label $w={79} />
              <Control>
                <GlyphBtn $w={26} $h={26} $deco="underline">U</GlyphBtn><Override /><Gap9 />
                <GlyphBtn $w={26} $h={26} $deco="line-through">S</GlyphBtn><Override />
                <Spacer />
                <GlyphBtn $w={26} $h={26} $dim>B</GlyphBtn><Override /><Gap9 />
                <GlyphBtn $w={26} $h={26} $dim $italic>C</GlyphBtn>
              </Control>
              <Override />
            </HRow>
            <HRow $h={24} $mt={9}><Label $w={79}>Tamaño</Label><Control><Field><span>11,0000</span><Spin /></Field></Control><Override /></HRow>
            <HRow $h={24} $mt={10}><Label $w={79} /><Control><Field $raised><span>Puntos</span><DropEnd $plain><Caret /></DropEnd></Field></Control><Override /></HRow>
            <HRow $h={26} $mt={9}><Label $w={79}>Color</Label><Control><ColorBtn><Red /></ColorBtn><Button $w={15} $h={26}><Caret w={9} /></Button></Control><Override /></HRow>
            <HRow $h={24} $mt={9}><Label $w={79}>Opacidad</Label><Control><Track><Knob /></Track><Field><span>100,0 %</span><Spin topOff /></Field></Control><Override /></HRow>
            <HRow $h={18} $mt={10} $gap={6}><Check /><Label>Permitir formato HTML</Label></HRow>
            <HRow $h={24} $mt={15} $gap={11}>
              <Field $w={560} $pad={11}><Icon n="mag" s={16} /><span>&nbsp;&nbsp;Todos los ajustes</span><Icon n="clear" s={17} /><DropEnd $w={25} $ml={10}><Caret /></DropEnd></Field>
              <Icon n="stylemgr" s={19} />
            </HRow>
            <StyleBox>
              <StyleBody><Heading>Estilos de proyecto</Heading><Heading>Predeterminado</Heading><Card>Aa</Card></StyleBody>
              <Scroll handle={94} />
            </StyleBox>
            <HRow $h={27} $mt={6} $gap={5}>
              <Button $w={28} $h={27} $on><Icon n="grid9" s={18} /></Button><Icon n="table" s={18} />
              <Spacer /><Button $w={100}>Guardar ajustes</Button><Gap9 as="span" style={{ width: 1 }} />
            </HRow>
          </Form>
        </Columns>
        <HRow $h={25} $mt={7} $gap={7}>
          <MenuButton $w={80}>Estilo<Caret w={9} /></MenuButton>
          <Spacer />
          <Button $w={80} $primary>Aceptar</Button><Button $w={80}>Cancelar</Button><Button $w={80}>Aplicar</Button><Button $w={80}>Ayuda</Button>
        </HRow>
      </Pane>
    </DialogBody>
  </Dialog>
);

/* ------------------------------------------------------------ status bar */

const Status = styled.div`
  ${small}
  height: 35px; border-bottom: 2px solid #222529; padding: 1px 8px 0 4px; display: flex; align-items: center; flex: none;
`;
const Cell = styled.div<{ $w: number; $c?: string }>`
  width: ${(p) => p.$w}px; flex: none; color: ${(p) => p.$c ?? "#000"}; display: flex; align-items: center; justify-content: flex-start;
`;

const MENU: [React.ReactNode, number][] = [
  [<>Pro<u>y</u>ecto</>, 58], [<><u>E</u>ditar</>, 38.5], [<><u>V</u>er</>, 22], [<><u>C</u>apa</>, 34], [<>Co<u>n</u>figuración</>, 93],
  [<>Co<u>m</u>plementos</>, 101], [<>Vect<u>o</u>rial</>, 58], [<><u>R</u>áster</>, 41], [<>Base de <u>d</u>atos</>, 92.5], [<><u>W</u>eb</>, 31],
  [<><u>M</u>alla</>, 36], [<>Pro<u>c</u>esos</>, 58], [<>A<u>y</u>uda</>, 42],
];

export default function App() {
  return (
    <Window>
      <Global />
      <TitleBar>
        <Icon n="qgis" s={20} />
        <TitleText>*Ejercicio_3 — QGIS</TitleText>
        <WinButtons>
          <svg width="12" height="13"><path d="M0 6.500h12" /></svg>
          <svg width="13" height="13"><path d="M.5 3.500h9v9h-9zM3 3.500V.5h9.500v9H10" /></svg>
          <svg width="13" height="13"><path d="m.5.5 12 12M12.500.5l-12 12" /></svg>
        </WinButtons>
      </TitleBar>
      <MenuBar>{MENU.map(([t, w], i) => <MenuItem key={i} $w={w}>{t}</MenuItem>)}</MenuBar>
      <Tools items={["|", "newdoc", "open", "save", "layout", "layoutmgr", "stylemgr", "|", "+hand", "pansel", "zoomin", "zoomout", "zoomfull", "zoomsel", "zoomlayer", "-zoom11", "zoomlast", "-zoomnext", "mapview", "view3d", "bmnew", "bm", "clock", "refresh", "|", "select", "v", "selform", "v", "desel", "v", "selloc", "|", "identify", "abacus", "gear", "sigma", "table", "v", "measure", "v", "maptip", "-action", "-v"]} />
      <Tools items={["|", "dsm", "gpkgnew", "veenew", "feathernew", "chip", "meshnew", "virtual", "|", "-pencils", "pencil", "-saveedit", "-digit", "-v", "-points", "-vertex", "-v", "-modattr", "-trash", "-cut", "-copy", "-paste", "-undo", "-redo", "|", "tag", "diagram", "/", "pin", "redtag", "/", "hidtag", "hidtag", "hidtag", "hidtag", "hidtag", "|", "python", "|", "book", "|"]} />
      <Tools items={["|", "+magnet", "snapv", "eye", "topo", "overlap", "cross", "bolt", "v", "trace"]} />
      <Tools items={["|", "-circ1", "-v", "-circ2", "-v", "-ellipse", "-v", "-rect", "-v", "-poly", "-v", "|", "-meshedit", "-meshsel", "-v", "-meshtr", "-meshv", "-v", "|", "astar", "v", "annsel", "annpoly", "annline", "annstar", "anntext", "/", "annbubble", "v"]} />
      <Main>
        <SideBar>
          <DotsH $x={21} $h={12} />
          {["veeadd", "raster", "meshadd", "comma", "featheradd", "virtualadd", "pgadd", "wmsadd", "wcsadd", "wfsadd", "veenew"].map((n, i) => (
            <SideRow key={n}><Icon n={n} />{(i === 6 || i === 10) && <Caret w={9} />}</SideRow>
          ))}
          <SideRow $x={15}><Icon n="gridadd" /></SideRow>
        </SideBar>
        <Docks>
          <DockTitle $up><span>Capas</span><DockBtn /></DockTitle>
          <DockTools $h={28} $b={4}>
            {["symb", "groupadd", "eye", "funneld", "exprf"].map((n) => <div key={n}><Icon n={n} s={16} /></div>)}
            <DropNarrow><Caret w={9} /></DropNarrow>
            {["expand", "collapse", "remove"].map((n) => <div key={n}><Icon n={n} s={16} /></div>)}
          </DockTools>
          <Tree $h={341}>
            <LayerRow $sel><Check><Tick /></Check><Swatch><Dot /></Swatch>Ciudades</LayerRow>
            <LayerRow><Check><Tick /></Check><Swatch><Line /></Swatch>Cuadrícula</LayerRow>
            <LayerRow><Check><Tick /></Check><Swatch><ColorBox $c="#f0f4c8" $b="#c2c69c" /></Swatch>Países</LayerRow>
            <LayerRow><Check><Tick /></Check><Swatch><ColorBox $c="#a5bfdd" $b="#7f9fc4" /></Swatch>Fondo</LayerRow>
          </Tree>
          <DotsH $x={107} $h={7} />
          <DockTitle><span>Navegador</span><DockBtn /></DockTitle>
          <DockTools $h={29} $b={3}>
            {["addlayer", "refresh", "funnel", "collapse", "info"].map((n) => <div key={n}><Icon n={n} s={15} /></div>)}
          </DockTools>
          <Tree $h={339}>
            <Row>
              <Fill>
                {BROWSER.map(([ic, t, ex]) => (
                  <BrowserRow key={t}><Expander>{ex && <Tri />}</Expander><TreeIcon><Icon n={ic} s={20} /></TreeIcon>{t}</BrowserRow>
                ))}
              </Fill>
              <Scroll handle={212} />
            </Row>
            <HBar><Btn17><TriL /></Btn17><HHandle /><HGap /><Btn17><Tri /></Btn17><Corner /></HBar>
          </Tree>
        </Docks>
        <Splitter />
        <MapView />
      </Main>
      <Status>
        <Field $w={305} $h={26} $pad={9}><Icon n="mag" s={17} /><Cell $w={200} $c="#777">&nbsp;&nbsp;Escriba para localizar (Ctrl+K)</Cell></Field>
        <Cell $w={9} />
        <Cell $w={650}>Alterna el estado de edición de la capa activa</Cell>
        <Cell $w={72}>Coordenada</Cell>
        <Field $w={100} $h={25} $pad={6}><span>-14,51° 87,38°</span></Field>
        <Cell $w={4} /><Cell $w={33}><Icon n="mouse" s={20} /></Cell>
        <Cell $w={40}>Escala</Cell>
        <Field $w={92} $h={25} $pad={2}><span>:18748184</span><DropEnd $w={27}><Caret /></DropEnd></Field>
        <Cell $w={11} /><Cell $w={26}><Icon n="lock" s={19} /></Cell>
        <Cell $w={74}>Amplificador</Cell>
        <Field $w={92} $h={25}><span>100%</span><Spin /></Field>
        <Cell $w={10} /><Cell $w={58}>Rotación</Cell>
        <Field $w={89} $h={25}><span>0,0 °</span><Spin /></Field>
        <Cell $w={6} /><Check><Tick /></Check>
        <Cell $w={6} /><Cell $w={84}>Representar</Cell>
        <Cell $w={22}><Icon n="crs" s={19} /></Cell><Cell $w={64}>EPSG:4326</Cell>
        <Spacer /><Icon n="msg" s={20} />
      </Status>
      <LayerDialog />
    </Window>
  );
}
